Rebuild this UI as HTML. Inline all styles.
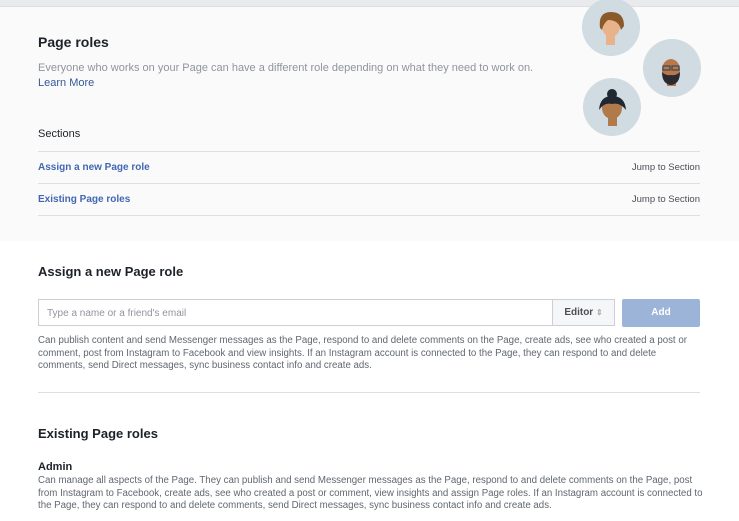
<!DOCTYPE html>
<html><head><style>
body{margin:0;width:739px;height:521px;overflow:hidden;font-family:"Liberation Sans",Arial,sans-serif;background:#fff;position:relative}
.top{position:absolute;left:0;top:0;width:739px;height:6px;background:#e9eaed;border-bottom:1px solid #dddfe2}
.gray{position:absolute;left:0;top:7px;width:739px;height:234px;background:#fafafa}
.a{position:absolute;white-space:nowrap}
.h{font-size:13px;font-weight:bold;color:#1d2129}
.g{font-size:11px;color:#90949c}
.l{font-size:10px;font-weight:bold;color:#4267b2}
.hr{position:absolute;left:38px;width:662px;height:1px;background:#dddfe2}
.c{position:absolute;width:58px;height:58px;border-radius:50%;background:#d0dbe2}
.p{font-size:9.7px;color:#606770;line-height:12.5px;position:absolute;left:38px;width:665px}
</style></head><body>
<div class="top"></div>
<div class="gray"></div>
<div class="c" style="left:582px;top:-2px"></div>
<div class="c" style="left:643px;top:39px"></div>
<div class="c" style="left:583px;top:78px"></div>
<svg width="739" height="140" style="position:absolute;left:0;top:0">
<rect x="606" y="33" width="9" height="12" fill="#e8b28a"/>
<ellipse cx="611" cy="26" rx="9" ry="11" fill="#e8b28a"/>
<path d="M600 28 Q598 12 611 12 Q624 12 624 26 L621 30 Q619 20 608 20 Q603 24 602 30Z" fill="#8b5a2b"/>
<rect x="667" y="76" width="9" height="10" fill="#b9774a"/>
<ellipse cx="671" cy="70" rx="9" ry="11" fill="#b9774a"/>
<path d="M662 72 Q662 84 671 85 Q680 84 680 72 Q676 76 671 75 Q666 76 662 72Z" fill="#2b2a30"/>
<rect x="663" y="66" width="7" height="4" fill="none" stroke="#3a4a5a" stroke-width="1.2"/>
<rect x="672" y="66" width="7" height="4" fill="none" stroke="#3a4a5a" stroke-width="1.2"/>
<rect x="608" y="115" width="9" height="11" fill="#b07a4a"/>
<ellipse cx="612" cy="108" rx="10" ry="11" fill="#b07a4a"/>
<circle cx="612" cy="94" r="5" fill="#1f2733"/>
<path d="M599 110 Q600 96 612 96 Q625 96 626 110 Q620 102 612 104 Q604 102 599 110Z" fill="#1f2733"/>
</svg>
<div class="a h" style="left:38px;top:34px;font-size:14px">Page roles</div>
<div class="a g" style="left:38px;top:62px">Everyone who works on your Page can have a different role depending on what they need to work on.</div>
<div class="a" style="left:38px;top:77px;font-size:11px;color:#365899">Learn More</div>
<div class="a" style="left:38px;top:128px;font-size:11px;color:#1d2129">Sections</div>
<div class="hr" style="top:151px"></div>
<div class="a l" style="left:38px;top:162px">Assign a new Page role</div>
<div class="a" style="right:39px;top:162px;font-size:9.5px;color:#4b4f56">Jump to Section</div>
<div class="hr" style="top:183px"></div>
<div class="a l" style="left:38px;top:194px">Existing Page roles</div>
<div class="a" style="right:39px;top:194px;font-size:9.5px;color:#4b4f56">Jump to Section</div>
<div class="hr" style="top:215px"></div>
<div class="a h" style="left:38px;top:264px">Assign a new Page role</div>
<div style="position:absolute;left:38px;top:299px;width:514px;height:27px;border:1px solid #ccd0d5;border-right:none;background:#fff;box-sizing:border-box"></div>
<div class="a" style="left:47px;top:308px;font-size:10px;color:#90949c">Type a name or a friend's email</div>
<div style="position:absolute;left:552px;top:299px;width:63px;height:27px;border:1px solid #ccd0d5;background:#f5f6f7;box-sizing:border-box;font-size:10px;font-weight:bold;color:#4b4f56;line-height:25px;text-align:center">Editor <span style="color:#aaa;font-size:8px">&#8661;</span></div>
<div style="position:absolute;left:622px;top:299px;width:78px;height:28px;border-radius:2px;background:#9cb4d8;color:#fff;font-size:10px;font-weight:bold;line-height:28px;text-align:center">Add</div>
<div class="p" style="top:335px">Can publish content and send Messenger messages as the Page, respond to and delete comments on the Page, create ads, see who created a post or comment, post from Instagram to Facebook and view insights. If an Instagram account is connected to the Page, they can respond to and delete comments, send Direct messages, sync business contact info and create ads.</div>
<div class="hr" style="top:392px"></div>
<div class="a h" style="left:38px;top:426px">Existing Page roles</div>
<div class="a" style="left:38px;top:461px;font-size:11px;font-weight:bold;color:#1d2129">Admin</div>
<div class="p" style="top:475px">Can manage all aspects of the Page. They can publish and send Messenger messages as the Page, respond to and delete comments on the Page, post from Instagram to Facebook, create ads, see who created a post or comment, view insights and assign Page roles. If an Instagram account is connected to the Page, they can respond to and delete comments, send Direct messages, sync business contact info and create ads.</div>
</body></html>
